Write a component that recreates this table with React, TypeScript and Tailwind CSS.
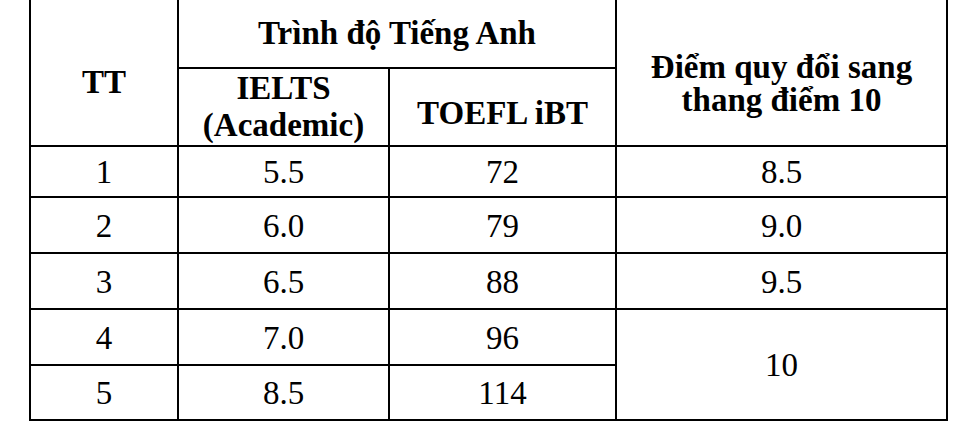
const rows = [
  { tt: '1', ielts: '5.5', toefl: '72', score: '8.5' },
  { tt: '2', ielts: '6.0', toefl: '79', score: '9.0' },
  { tt: '3', ielts: '6.5', toefl: '88', score: '9.5' },
  { tt: '4', ielts: '7.0', toefl: '96' },
  { tt: '5', ielts: '8.5', toefl: '114' },
]

const rowHeights = ['h-[49px]', 'h-[54px]', 'h-[54px]', 'h-[54px]', 'h-[53px]']

function Cell({ children, className = '' }: { children?: React.ReactNode; className?: string }) {
  return <div className={`flex items-center justify-center bg-white text-center ${className}`}>{children}</div>
}

export default function App() {
  return (
    <div className="h-[440px] w-[968px] bg-white font-['Liberation_Serif','Times_New_Roman',serif] text-black">
      <div className="ml-[29px] grid w-[919px] grid-cols-[146px_209px_225px_329px] gap-[2px] bg-black px-[2px] pb-[2px] text-[33px]">
        {/* header */}
        <Cell className="row-span-2 pt-[20px] font-bold leading-[1.15]">TT</Cell>
        <Cell className="col-span-2 h-[67px] pt-[1px] font-bold leading-[1.15]">Trình độ Tiếng Anh</Cell>
        <Cell className="row-span-2 pt-[23px] font-bold leading-[33px]">
          Điểm quy đổi sang
          <br />
          thang điểm 10
        </Cell>
        <Cell className="h-[76px] font-bold leading-[37px]">
          IELTS
          <br />
          (Academic)
        </Cell>
        <Cell className="h-[76px] pt-[14px] font-bold leading-[1.15]">TOEFL iBT</Cell>

        {/* body */}
        {rows.map((r, i) => (
          <div key={r.tt} className="contents">
            <Cell className={`${rowHeights[i]} pt-[3px] leading-[1.15]`}>{r.tt}</Cell>
            <Cell className={`${rowHeights[i]} pt-[3px] leading-[1.15]`}>{r.ielts}</Cell>
            <Cell className={`${rowHeights[i]} pt-[3px] leading-[1.15]`}>{r.toefl}</Cell>
            {r.score && <Cell className={`${rowHeights[i]} pt-[3px] leading-[1.15]`}>{r.score}</Cell>}
            {i === 3 && <Cell className="row-span-2 pt-[3px] leading-[1.15]">10</Cell>}
          </div>
        ))}
      </div>
    </div>
  )
}
